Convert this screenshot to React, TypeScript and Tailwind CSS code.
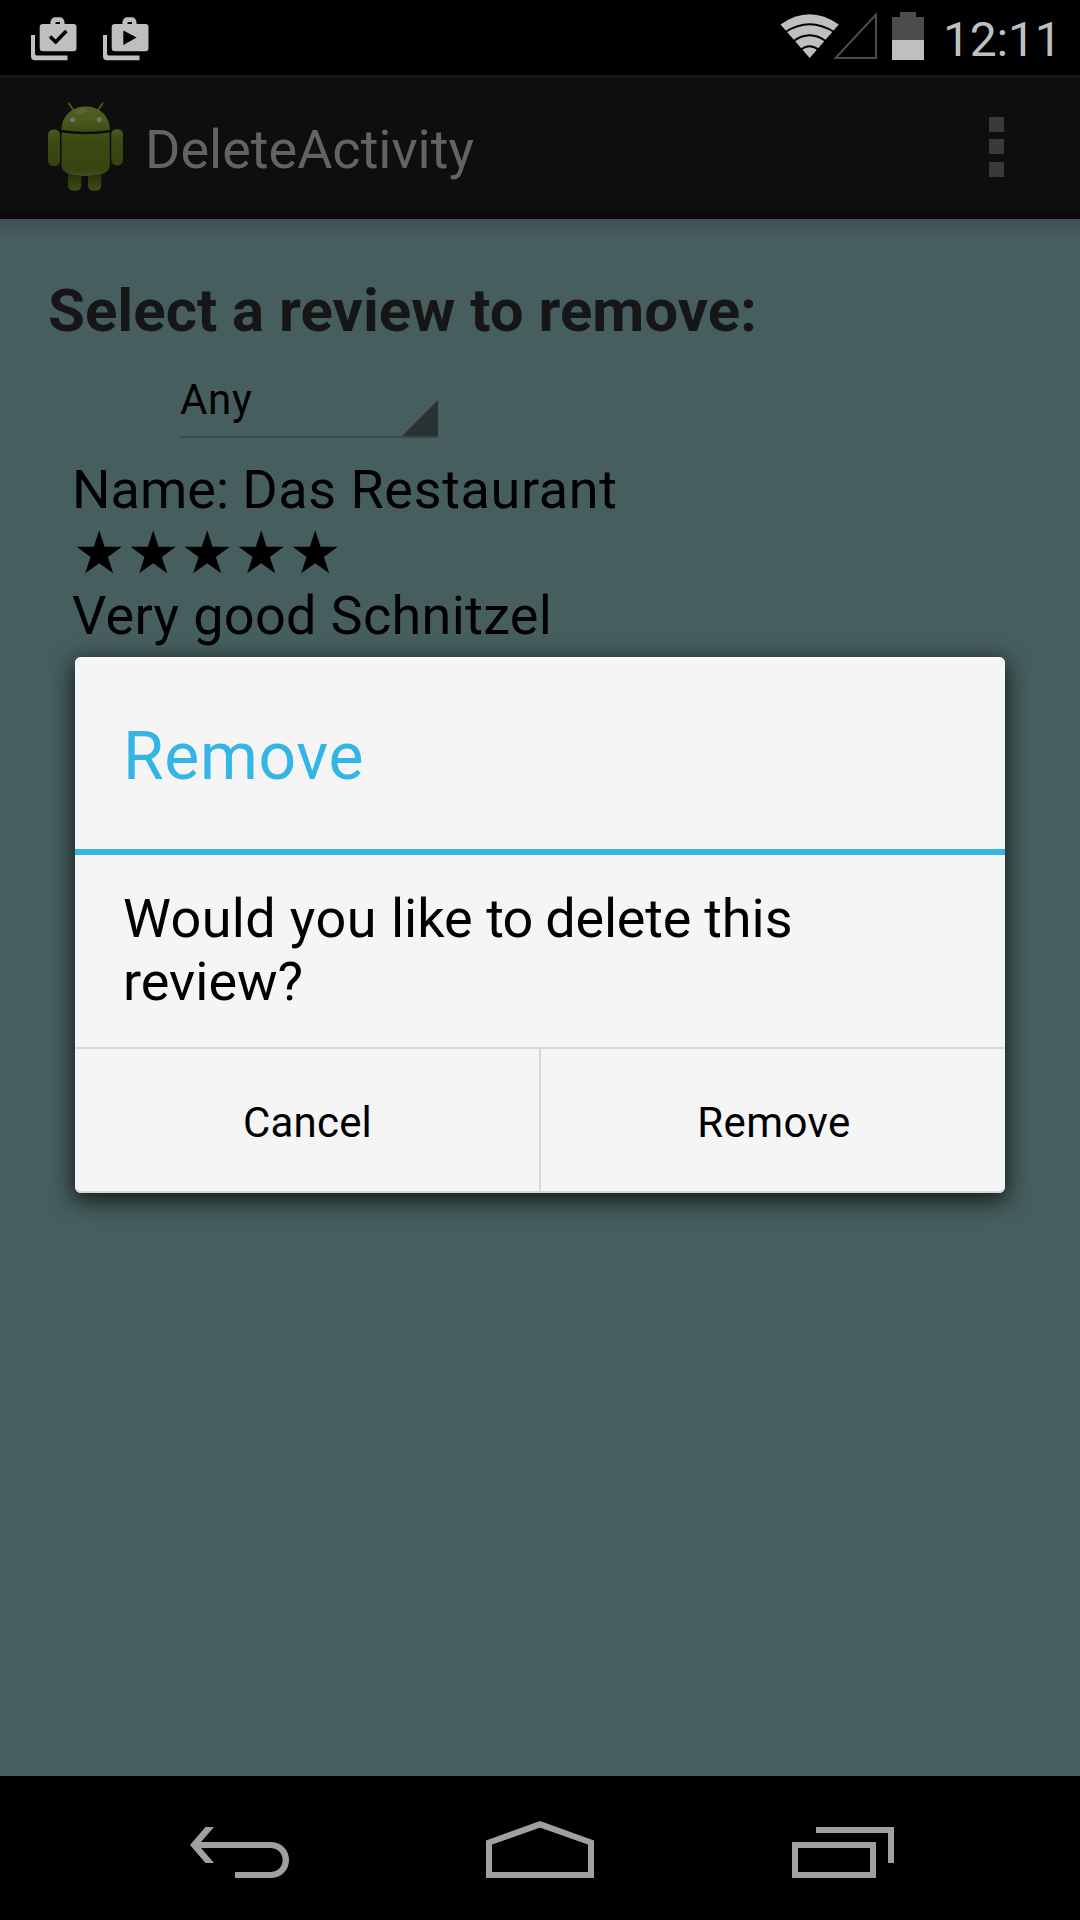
import React from "react";

function BagIcon({ kind }: { kind: "check" | "play" }) {
  return (
    <svg width="48" height="48" viewBox="0 0 48 48" fill="#bfbfbf">
      <path d="M2 19H6V37.500Q6 39.500 8 39.500H38.500V44.200H6Q2 44.200 2 40.200Z" />
      <path
        fillRule="evenodd"
        d="M21.500 8V5.500Q23 1.300 26 1.300H31Q34 1.300 35.500 5.500V8H44.500Q47.500 8 47.500 11V32Q47.500 35.200 44.500 35.200H14Q10.700 35.200 10.700 32V11Q10.700 8 14 8ZM26.500 6V8H31V6Z"
      />
      {kind === "check" ? (
        <path d="M21 20.500L26.700 26L37.300 15" fill="none" stroke="#000" strokeWidth="3.600" />
      ) : (
        <path d="M22.300 14.500V29L35.700 21.500Z" fill="#000" />
      )}
    </svg>
  );
}

function WifiIcon() {
  return (
    <svg width="60" height="46" viewBox="780 14 60 46">
      <path d="M780.500 24.500Q809.500 4 838.800 24.500L809.700 58Z" fill="#bfbfbf" />
      <g fill="none" stroke="#000" strokeWidth="2">
        <path d="M785.500 32Q809.500 16.500 834 32" />
        <path d="M793 41.500Q809.500 29 826.500 41.500" />
        <path d="M800.500 50Q809.500 42.500 819 50" />
      </g>
    </svg>
  );
}

function AndroidRobot() {
  return (
    <svg width="76" height="90" viewBox="48 101 76 90">
      <defs>
        <linearGradient id="head" x1="0" y1="0" x2="0" y2="1">
          <stop offset="0" stopColor="#4f6122" />
          <stop offset=".5" stopColor="#4a5c1d" />
          <stop offset="1" stopColor="#3e4d14" />
        </linearGradient>
        <linearGradient id="torso" x1="0" y1="0" x2="0" y2="1">
          <stop offset="0" stopColor="#425216" />
          <stop offset=".15" stopColor="#3b4913" />
          <stop offset=".88" stopColor="#374513" />
          <stop offset="1" stopColor="#434f28" />
        </linearGradient>
        <linearGradient id="limb" x1="0" y1="0" x2="0" y2="1">
          <stop offset="0" stopColor="#4a5b1b" />
          <stop offset=".3" stopColor="#3c4a13" />
          <stop offset="1" stopColor="#36430f" />
        </linearGradient>
        <linearGradient id="leg" x1="0" y1="0" x2="0" y2="1">
          <stop offset="0" stopColor="#1b2307" />
          <stop offset=".6" stopColor="#323e0f" />
          <stop offset="1" stopColor="#3f4c17" />
        </linearGradient>
      </defs>
      <path d="M69 103.500L73 109.500M102.500 103.500L98.500 109.500" stroke="#435218" strokeWidth="2.200" strokeLinecap="round" />
      <rect x="68" y="168" width="13.300" height="22.700" rx="5" fill="url(#leg)" />
      <rect x="88" y="168" width="13.300" height="22.700" rx="5" fill="url(#leg)" />
      <path d="M61.500 130C61.500 98.500 109.800 98.500 109.800 130Q86 133.500 61.500 130Z" fill="url(#head)" />
      <ellipse cx="81" cy="111.500" rx="6" ry="2.500" fill="#6a6845" opacity=".6" transform="rotate(-12 81 111.500)" />
      <path d="M61.500 131Q86 137 109.800 131V165Q109.800 176 86 176Q61.500 176 61.500 165Z" fill="#070802" />
      <path d="M61.500 132.500Q86 136 109.800 132.500V165Q109.800 176 86 176Q61.500 176 61.500 165Z" fill="url(#torso)" />
      <rect x="48" y="129.500" width="12" height="36.500" rx="5.500" fill="url(#limb)" />
      <rect x="111.300" y="129" width="11.700" height="36.500" rx="5.500" fill="url(#limb)" />
      <circle cx="72.700" cy="119.700" r="2.500" fill="#747474" />
      <circle cx="99.200" cy="119.700" r="2.500" fill="#747474" />
    </svg>
  );
}

function StatusBar() {
  return (
    <header className="flex h-[75px] shrink-0 items-start bg-black">
      <div className="flex gap-6 pl-[29.400px] pt-4">
        <BagIcon kind="check" />
        <BagIcon kind="play" />
      </div>
      <div className="ml-auto flex items-start pr-[17px]">
        <div className="mt-[14px] h-[46px] w-[60px]">
          <WifiIcon />
        </div>
        <svg className="-ml-[8px] mt-[11px]" width="46" height="49" viewBox="832 11 46 49">
          <path d="M835.500 58H876V14.500Z" fill="none" stroke="#4c4c4c" strokeWidth="2" />
        </svg>
        <svg className="ml-[14px] mt-[12px]" width="32" height="48" viewBox="0 0 32 48">
          <path d="M0 5H8V0H24V5H32V28H0Z" fill="#4c4c4c" />
          <path d="M0 28H32V48H0Z" fill="#bfbfbf" />
        </svg>
        <span className="ml-[19px] mt-[12px] w-[120px] text-[48px] leading-[56px] tracking-[-0.200px] text-[#bfbfbf]">12:11</span>
      </div>
    </header>
  );
}

function ActionBar() {
  return (
    <div className="flex h-36 shrink-0 items-start border-t-[3px] border-b-[6px] border-t-[#191919] border-b-[#0a0a0a] bg-[#0e0e0e] pl-12">
      <div className="mt-[23px]">
        <AndroidRobot />
      </div>
      <h1 className="ml-[21px] mt-[40px] text-[54px] leading-[63px] text-[#636363]">DeleteActivity</h1>
      <div className="ml-auto mr-[76px] mt-[39px] flex flex-col">
        <i className="mb-[7px] size-[15px] bg-[#3a3a3a]" />
        <i className="mb-[8px] size-[15px] bg-[#3a3a3a]" />
        <i className="size-[15px] bg-[#3a3a3a]" />
      </div>
    </div>
  );
}

function NavigationBar() {
  return (
    <nav className="flex h-36 shrink-0 items-start bg-black pl-[190px] pt-[44px]">
      <svg width="100" height="60" viewBox="190 1820 100 60" fill="#a0a0a0">
        <path d="M190 1845L205.500 1827H214L201 1842H271C295 1843 295 1877 271 1878H235V1872H271C286.500 1871 286.500 1849 271 1848H201L214 1863H205.500Z" />
      </svg>
      <svg className="ml-[196px]" width="108" height="60" viewBox="486 1820 108 60">
        <path d="M489 1875V1842.500L540 1824.300L591 1842.500V1875Z" fill="none" stroke="#a0a0a0" strokeWidth="6" />
      </svg>
      <svg className="ml-[198px]" width="102" height="60" viewBox="792 1820 102 60" fill="none" stroke="#a0a0a0" strokeWidth="6">
        <path d="M795 1845H873V1875H795ZM816 1830H891V1863" />
      </svg>
    </nav>
  );
}

function RemoveDialog() {
  return (
    <section className="absolute left-[75px] top-[657px] flex h-[536px] w-[930px] flex-col rounded-[6px] bg-[#f5f5f5] shadow-[0_6px_22px_2px_rgba(0,0,0,0.7),inset_0_2px_0_#fbfbfb,inset_0_-2px_0_#d3d6d6]">
      <h3 className="h-[198px] border-b-[6px] border-[#33b5e5] pt-[61px] pl-12 text-[66px] leading-[78px] tracking-[0.650px] text-[#33b5e5]">
        Remove
      </h3>
      <p className="h-[194px] border-b-2 border-[#dadada] px-[48px] pt-[32px] text-[54px] leading-[63px]">
        <span className="tracking-[0.370px]">Would </span>
        <span className="tracking-[0.500px]">you </span>
        like <span className="tracking-[-0.700px]">to </span>
        <span className="tracking-[-0.250px]">delete </span>
        this review?
      </p>
      <div className="flex flex-1 text-[42px] leading-[50px]">
        <button className="w-[466px] border-r-2 border-[#d8d8d8] pt-[3px] pl-[1px] tracking-[0.200px]">Cancel</button>
        <button className="flex-1 pt-[3px] pl-[2px] tracking-[0.400px]">Remove</button>
      </div>
    </section>
  );
}

export default function App() {
  return (
    <div className="relative flex h-[1920px] w-[1080px] flex-col overflow-hidden bg-[#465e5e] font-['Roboto',sans-serif] text-black">
      <StatusBar />
      <ActionBar />
      <main className="flex-1 bg-linear-to-b from-[#3e5052] to-[#465e5e] to-[20px] pl-12 pt-[57px]">
        <h2 className="text-[60px] leading-[70px] font-bold text-[#161616]">Select a review to remove:</h2>
        <div className="mt-[29px] ml-[132px] flex h-[63px] w-[258px] justify-between border-b-2 border-[#374a49]">
          <span className="text-[42px] leading-[50px] tracking-[0.700px]">Any</span>
          <span className="size-9 self-end bg-[#2a3333] [clip-path:polygon(100%_0,100%_100%,0_100%)]" />
        </div>
        <div className="mt-5 ml-6 text-[54px] leading-[63px]">
          <p>
            Name: <span className="tracking-[0.500px]">Das </span>
            <span className="tracking-[0.650px]">Restaurant</span>
          </p>
          <p className="pl-[0.700px] font-['DejaVu_Sans',sans-serif] text-[59px] tracking-[1.140px]">★★★★★</p>
          <p className="tracking-[0.320px]">Very good Schnitzel</p>
        </div>
      </main>
      <NavigationBar />
      <RemoveDialog />
    </div>
  );
}
